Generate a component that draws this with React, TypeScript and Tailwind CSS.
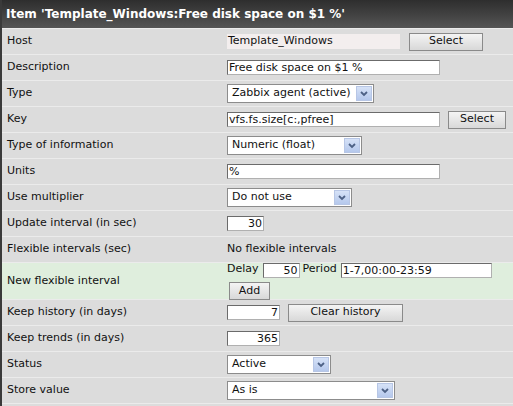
import React from "react";

const font = { fontFamily: '"DejaVu Sans", Verdana, sans-serif' };

function Row({ label, children, h = "h-[26px]", green = false }: { label: string; children?: React.ReactNode; h?: string; green?: boolean }) {
  return (
    <div className={`flex items-center ${h} border-t border-[#ebebeb] ${green ? "bg-[#dfeedd]" : "bg-[#dcdcdc]"}`}>
      <div className="w-[225px] pl-[5px] text-[11px] text-[#111]">{label}</div>
      <div className="flex-1 flex items-center text-[11px] text-[#111]">{children}</div>
    </div>
  );
}

function Input({ w, value, right = false }: { w: string; value: string; right?: boolean }) {
  return (
    <div className={`${w} h-[15px] bg-white border border-t-[#6b6b6b] border-l-[#6b6b6b] border-r-[#b0b0b0] border-b-[#b0b0b0] text-[11px] leading-[13px] px-[1px] ${right ? "text-right" : ""}`}>
      {value}
    </div>
  );
}

function Button({ w, label, h = "h-[18px]" }: { w: string; label: string; h?: string }) {
  return (
    <div className={`${w} ${h} flex items-center justify-center border border-[#8a8a8a] bg-gradient-to-b from-[#f4f4f4] to-[#d8d8d8] text-[11px] text-[#111]`}>
      {label}
    </div>
  );
}

function Select({ w, value }: { w: string; value: string }) {
  return (
    <div className={`${w} h-[19px] flex items-center bg-white border border-[#8c8c8c] pl-[4px] pr-[1px]`}>
      <span className="flex-1 text-[11px]">{value}</span>
      <div className="w-[16px] h-[15px] flex items-center justify-center bg-gradient-to-b from-[#d6e2f7] to-[#b5c8ec] border border-[#b7c6e5]">
        <svg width="8" height="6" viewBox="0 0 8 6">
          <path d="M1 1 L4 4 L7 1" stroke="#4d6185" strokeWidth="1.8" fill="none" />
        </svg>
      </div>
    </div>
  );
}

export default function App() {
  return (
    <div className="w-[513px] h-[406px] bg-[#dcdcdc] border-l-2 border-[#3a3a3a] overflow-hidden" style={font}>
      <div className="h-[28px] flex items-center pl-[4px] bg-gradient-to-b from-[#2e2e2e] to-[#555] text-white font-bold text-[12px]">
        Item 'Template_Windows:Free disk space on $1 %'
      </div>
      <Row label="Host">
        <div className="w-[173px] h-[15px] bg-[#f3eeee] text-[11px] leading-[14px] px-[1px]">Template_Windows</div>
        <div className="ml-[9px]"><Button w="w-[74px]" label="Select" /></div>
      </Row>
      <Row label="Description">
        <Input w="w-[213px]" value="Free disk space on $1 %" />
      </Row>
      <Row label="Type">
        <Select w="w-[147px]" value="Zabbix agent (active)" />
      </Row>
      <Row label="Key">
        <Input w="w-[213px]" value="vfs.fs.size[c:,pfree]" />
        <div className="ml-[8px]"><Button w="w-[58px]" label="Select" /></div>
      </Row>
      <Row label="Type of information">
        <Select w="w-[135px]" value="Numeric (float)" />
      </Row>
      <Row label="Units">
        <Input w="w-[213px]" value="%" />
      </Row>
      <Row label="Use multiplier">
        <Select w="w-[125px]" value="Do not use" />
      </Row>
      <Row label="Update interval (in sec)">
        <Input w="w-[37px]" value="30" right />
      </Row>
      <Row label="Flexible intervals (sec)">
        <span>No flexible intervals</span>
      </Row>
      <Row label="New flexible interval" h="h-[37px]" green>
        <div className="flex flex-col">
          <div className="flex items-center">
            <span className="mr-[4px] relative -top-[1px]">Delay</span>
            <Input w="w-[37px]" value="50" right />
            <span className="ml-[3px] mr-[4px] relative -top-[1px]">Period</span>
            <Input w="w-[151px]" value="1-7,00:00-23:59" />
          </div>
          <div className="mt-[3px] ml-[2px]"><Button w="w-[41px]" label="Add" /></div>
        </div>
      </Row>
      <Row label="Keep history (in days)">
        <Input w="w-[53px]" value="7" right />
        <div className="ml-[8px]"><Button w="w-[115px]" label="Clear history" /></div>
      </Row>
      <Row label="Keep trends (in days)">
        <Input w="w-[53px]" value="365" right />
      </Row>
      <Row label="Status">
        <Select w="w-[104px]" value="Active" />
      </Row>
      <Row label="Store value">
        <Select w="w-[168px]" value="As is" />
      </Row>
      <div className="h-[4px] border-t border-[#ebebeb]" />
    </div>
  );
}
